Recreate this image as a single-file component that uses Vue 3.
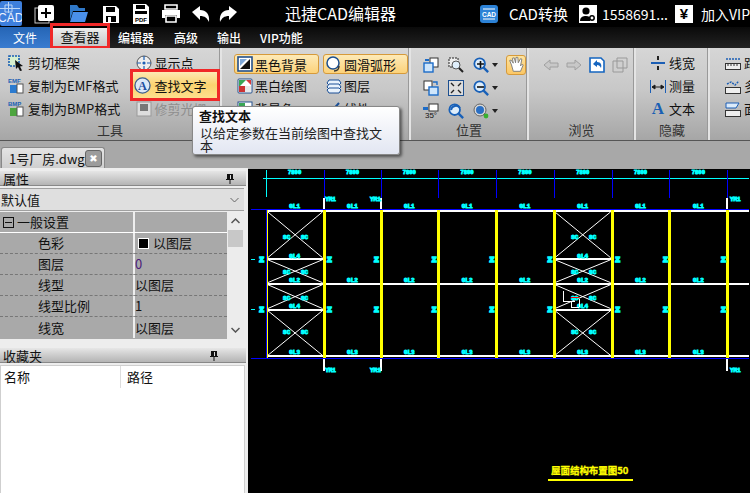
<script setup>
const cols = [265, 323, 381, 438, 496, 554, 612, 670, 728]
const yellow = [323, 381, 438, 496, 554, 612, 670, 728]
const mids = [294, 352, 409, 467, 525, 583, 641, 699]
const horiz = [258, 309]
const bracedBays = [[267, 322], [555, 611]]
const brace = [[211, 257], [259, 282], [284, 308], [310, 355]]
const sideLabels = [261, 329, 376, 434, 492, 550, 618, 666, 724]
const stubs = [323, 381, 728]
const ymLabels = [[330, 200], [375, 200], [736, 200], [330, 372], [375, 372], [736, 372]]
const rows = [
  { name: '色彩', val: '以图层', swatch: true },
  { name: '图层', val: '0', purple: true },
  { name: '线型', val: '以图层' },
  { name: '线型比例', val: '1' },
  { name: '线宽', val: '以图层' }
]
</script>

<template>
  <div class="app">
    <svg class="defs" width="0" height="0">
      <symbol id="mag" viewBox="0 0 18 18">
        <circle cx="7.5" cy="7.5" r="6" fill="#dfeefb" stroke="#1860b8" stroke-width="2" />
        <path d="M12 12l5 5" stroke="#1860b8" stroke-width="2.6" />
      </symbol>
      <symbol id="pages" viewBox="0 0 16 16">
        <rect x="7" y="1" width="8" height="9" fill="#fff" stroke="#333" />
        <rect x="1" y="6" width="9" height="9" fill="#cfe6fb" stroke="#1c6cc8" stroke-width="1.4" />
        <path d="M2 2h4v2H2z" fill="#1c6cc8" />
      </symbol>
    </svg>

    <header class="title">
      <svg class="logo" width="22" height="25" viewBox="0 0 22 25">
        <rect width="22" height="25" rx="2" fill="#3d7fdc" />
        <path d="M0 7.500H20M8.500 1V12M5 4h7v7H5z" fill="none" stroke="#bcd6f6" />
        <text x="-2" y="21" class="logo-t">CAD</text>
      </svg>
      <div class="quick">
        <svg class="q" width="22" height="22" viewBox="0 0 22 22"><rect x="1" y="5" width="14" height="15" fill="none" stroke="#ccc" /><rect x="4" y="2" width="16" height="16" rx="2" fill="#fff" /><path d="M12 5v10M7 10h10" stroke="#000" stroke-width="2" /></svg>
        <svg class="q folder" width="20" height="20" viewBox="0 0 20 20"><path d="M1 1h7l2 3h6v3H4L1 16z" fill="#2f78c8" /><path d="M4 8h15l-3 10H1z" fill="#4a90ea" /></svg>
        <svg class="q disk" width="18" height="20" viewBox="0 0 18 20"><path d="M1 2h13l3 3v14H1z" fill="#fff" /><path d="M4 3h9v5H4zM4 12h10v6H4z" fill="#000" /><rect x="6" y="13" width="3" height="5" fill="#fff" /></svg>
        <svg class="q pdf" width="18" height="22" viewBox="0 0 18 22"><path d="M1 1h13l3 3v17H1z" fill="#fff" /><path d="M4 2h9v4H4zM3 8h12v3H3z" fill="#000" /><text x="9" y="19" text-anchor="middle" class="pdf-t">PDF</text></svg>
        <svg class="q print" width="20" height="19" viewBox="0 0 20 19"><path d="M4 1h12v4H4z" fill="none" stroke="#fff" stroke-width="1.6" /><path d="M1 6h18v8h-3v-3H4v3H1z" fill="#fff" /><path d="M5 12h10v6H5z" fill="none" stroke="#fff" stroke-width="1.6" /></svg>
        <svg class="q undo" width="18" height="18" viewBox="0 0 18 18"><path d="M0 7l8-6v4c6 0 10 4 9 12-2-4-4-6-9-6v4z" fill="#fff" /></svg>
        <svg class="q redo" width="18" height="18" viewBox="0 0 18 18"><path d="M18 7l-8-6v4C4 5 0 9 1 17c2-4 4-6 9-6v4z" fill="#fff" /></svg>
      </div>
      <div class="app-name">迅捷CAD编辑器</div>
      <div class="status">
        <svg class="conv" width="18" height="18" viewBox="0 0 18 18"><rect width="18" height="18" rx="3" fill="#2c82d6" /><path d="M3 4h12M3 14h12" stroke="#fff" /><text x="9" y="12" text-anchor="middle" class="cad-t">CAD</text></svg>
        <span class="st-a">CAD转换</span>
        <svg class="usr" width="18" height="18" viewBox="0 0 18 18"><rect width="18" height="18" fill="#fff" /><circle cx="7" cy="6" r="3.6" /><path d="M1 16c0-4 3-5 6-5s4 1 4 2v3z" /><circle cx="13" cy="13" r="2.2" fill="none" stroke="#000" stroke-width="1.5" /></svg>
        <span class="st-b">1558691...</span>
        <span class="yen">¥</span>
        <span class="st-c">加入VIP</span>
      </div>
    </header>

    <nav class="menu">
      <div class="file">文件</div>
      <div class="viewer"><span>查看器</span></div>
      <div class="mi m1">编辑器</div>
      <div class="mi m2">高级</div>
      <div class="mi m3">输出</div>
      <div class="mi m4">VIP功能</div>
    </nav>

    <section class="ribbon">
      <div class="group g1">
        <div class="cols">
          <div class="col c1">
            <div class="rb">
              <svg width="16" height="16" viewBox="0 0 16 16"><rect x="1" y="1" width="10" height="10" fill="#d8f0d0" stroke="#1a5fb4" stroke-dasharray="2 1" stroke-width="1.6" /><path d="M7 5l8 6-3 .5 2 4-2 .5-2-4-2 2z" fill="#111" /></svg>
              <span>剪切框架</span>
            </div>
            <div class="rb">
              <svg width="16" height="17" viewBox="0 0 16 17"><text x="0" y="6" class="ico-t blue">EMF</text><rect x="2" y="8" width="7" height="8" fill="#2b7bd0" /><rect x="9" y="7" width="6" height="9" fill="#fff" stroke="#555" /></svg>
              <span>复制为EMF格式</span>
            </div>
            <div class="rb">
              <svg width="16" height="17" viewBox="0 0 16 17"><text x="0" y="6" class="ico-t blue">BMP</text><rect x="2" y="8" width="7" height="8" fill="#4da53f" /><rect x="9" y="7" width="6" height="9" fill="#fff" stroke="#555" /></svg>
              <span>复制为BMP格式</span>
            </div>
          </div>
          <div class="col c2">
            <div class="rb">
              <svg width="16" height="16" viewBox="0 0 16 16"><circle cx="8" cy="8" r="7" fill="#eee" stroke="#555" /><path d="M8 1v4M8 11v4M1 8h4M11 8h4" stroke="#1c5fb5" stroke-width="1.2" /><circle cx="8" cy="8" r="1.6" fill="#1c5fb5" /></svg>
              <span>显示点</span>
            </div>
            <div class="rb active">
              <svg width="17" height="17" viewBox="0 0 18 18"><circle cx="9" cy="9" r="8" fill="#dce8f6" stroke="#3a5f90" stroke-width="1.4" /><text x="9" y="14" text-anchor="middle" class="a-t">A</text></svg>
              <span>查找文字</span>
            </div>
            <div class="rb dim">
              <svg width="16" height="16" viewBox="0 0 16 16"><rect x="1" y="1" width="14" height="14" fill="#ddd" stroke="#999" /><rect x="4" y="3" width="8" height="7" fill="#777" /></svg>
              <span>修剪光栅</span>
            </div>
          </div>
        </div>
        <div class="glabel">工具</div>
      </div>

      <div class="group g2">
        <div class="cols">
          <div class="col c3">
            <div class="rb on">
              <svg width="16" height="16" viewBox="0 0 16 16"><rect x="1" y="1" width="14" height="14" fill="#fff" stroke="#24508c" stroke-width="1.6" /><path d="M3 13L13 3v10z" fill="#111" /><path d="M3 3h7L3 10z" fill="#7fa8d8" /></svg>
              <span>黑色背景</span>
            </div>
            <div class="rb">
              <svg width="16" height="16" viewBox="0 0 16 16"><rect x="1" y="1" width="14" height="14" rx="1" fill="#fff" stroke="#24508c" /><path d="M2 2h7L2 9z" fill="#3aa655" /><path d="M9 2h5v5z" fill="#d83a3a" /><rect x="2" y="8" width="6" height="6" fill="#c33" /><rect x="8" y="8" width="6" height="6" fill="#e8e8e8" /></svg>
              <span>黑白绘图</span>
            </div>
            <div class="rb">
              <svg width="16" height="16" viewBox="0 0 16 16"><rect x="1" y="1" width="14" height="14" fill="#fff" stroke="#24508c" /><path d="M2 2h6v4H2z" fill="#3aa655" /></svg>
              <span>背景色</span>
            </div>
          </div>
          <div class="col c4">
            <div class="rb on">
              <svg width="16" height="16" viewBox="0 0 16 16"><circle cx="7" cy="7" r="6" fill="#fff" stroke="#1c4f90" stroke-width="1.5" /><path d="M13 10c0 3-2 5-5 5" fill="none" stroke="#333" stroke-width="1.4" /></svg>
              <span>圆滑弧形</span>
            </div>
            <div class="rb">
              <svg width="16" height="16" viewBox="0 0 16 16"><g fill="#e9f2fb" stroke="#1a4f96"><path d="M3 2h10l2 3-2 2H3L1 5z" /><path d="M3 6h10l2 3-2 2H3L1 9z" /><path d="M3 10h10l2 2-2 3H3l-2-3z" /></g></svg>
              <span>图层</span>
            </div>
            <div class="rb">
              <svg width="16" height="16" viewBox="0 0 16 16"><path d="M2 14L13 2" stroke="#1a4f96" stroke-width="2" /></svg>
              <span>线性</span>
            </div>
          </div>
        </div>
      </div>

      <div class="group g3">
        <div class="icon-grid">
          <svg class="ig" width="16" height="16"><use href="#pages" /></svg>
          <svg class="ig" width="16" height="16" viewBox="0 0 16 16"><rect x="1" y="1" width="9" height="9" fill="#eee" stroke="#222" stroke-dasharray="2 1" /><circle cx="8" cy="8" r="4" fill="#dfeefb" stroke="#555" /><path d="M11 11l4 4" stroke="#222" stroke-width="2" /></svg>
          <div class="ig drop"><svg width="16" height="16"><use href="#mag" /><path d="M4 7h7M7.5 4v7" stroke="#111" stroke-width="1.6" /></svg><i></i></div>
          <svg class="hand" width="20" height="20" viewBox="0 0 20 20"><path d="M5 10L3 5l1.500-.5L7 8 6 2.500 8 2l1.500 5.500L10 1.500h2l.5 6L15 3l1.500.5-1.500 7.500 2-2 1 1-3 7H7z" fill="#fff" stroke="#777" /></svg>
          <svg class="ig" width="16" height="16" viewBox="0 0 16 16"><rect x="1" y="1" width="8" height="9" fill="#fff" stroke="#333" /><rect x="6" y="7" width="9" height="8" fill="#cfe6fb" stroke="#1c6cc8" stroke-width="1.4" /><path d="M10 2h4v3" fill="none" stroke="#1c6cc8" stroke-width="1.4" /></svg>
          <svg class="ig" width="16" height="16" viewBox="0 0 16 16"><rect x=".5" y=".5" width="15" height="15" fill="#ddd" stroke="#1c4f90" /><path d="M3 3l3 3M13 3l-3 3M3 13l3-3M13 13l-3-3" stroke="#222" stroke-width="1.4" /></svg>
          <div class="ig drop"><svg width="16" height="16"><use href="#mag" /><path d="M4 7h7" stroke="#111" stroke-width="1.6" /></svg><i></i></div>
          <span></span>
          <svg class="ig" width="16" height="16" viewBox="0 0 16 16"><rect x="6" y="1" width="9" height="7" fill="#fff" stroke="#333" /><path d="M0 4h5v3H0z" fill="#1c6cc8" /><text x="8" y="15" text-anchor="middle" class="deg">35°</text></svg>
          <svg class="ig" width="16" height="16"><use href="#mag" /><path d="M3 7a5 5 0 0 1 9-2" fill="none" stroke="#1860b8" stroke-width="2" /></svg>
          <div class="ig drop"><svg width="16" height="16" viewBox="0 0 16 16"><circle cx="7" cy="7" r="6" fill="#d8d8d8" stroke="#666" /><circle cx="7" cy="7" r="4" fill="#2a6fc4" /><path d="M11 11l3 3" stroke="#555" stroke-width="2" /><circle cx="13" cy="13" r="2.400" fill="#38b030" /></svg><i></i></div>
          <span></span>
        </div>
        <div class="glabel">位置</div>
      </div>

      <div class="group g4">
        <div class="browse">
          <svg width="16" height="12" viewBox="0 0 16 12"><path d="M1 6l6-5v3h8v4H7v3z" fill="#c8c8c8" stroke="#a0a0a0" /></svg>
          <svg width="16" height="12" viewBox="0 0 16 12"><path d="M15 6L9 1v3H1v4h8v3z" fill="#c8c8c8" stroke="#a0a0a0" /></svg>
          <svg width="16" height="16" viewBox="0 0 16 16"><path d="M1 1h11l3 3v11H1z" fill="#fff" stroke="#1565c0" stroke-width="1.6" /><path d="M4 7l4-4v2c4 0 5 3 4 6-1-2-2-3-4-3v2z" fill="#1565c0" /></svg>
          <svg width="16" height="16" viewBox="0 0 16 16"><path d="M1 4h10v11H1z" fill="#cfcfcf" stroke="#999" /><path d="M5 1h10v10H5z" fill="none" stroke="#999" /></svg>
        </div>
        <div class="glabel">浏览</div>
      </div>

      <div class="group g5">
        <div class="col tools">
          <div class="rb">
            <svg width="16" height="16" viewBox="0 0 16 16"><path d="M1 8h14" stroke="#1c5fb5" stroke-width="2" /><path d="M8 1v4M8 11v4" stroke="#222" stroke-width="2" /></svg>
            <span>线宽</span>
          </div>
          <div class="rb">
            <svg width="16" height="16" viewBox="0 0 16 16"><path d="M.5 2v13M15.500 2v13" stroke="#1c5fb5" /><path d="M2 9h12M2 9l3-2v4zM14 9l-3-2v4z" stroke="#222" /></svg>
            <span>测量</span>
          </div>
          <div class="rb">
            <span class="big-a">A</span>
            <span>文本</span>
          </div>
        </div>
        <div class="glabel">隐藏</div>
      </div>

      <div class="group g6">
        <div class="col tools">
          <div class="rb">
            <svg width="16" height="16" viewBox="0 0 16 16"><path d="M1 4h14" stroke="#1c5fb5" stroke-dasharray="2 1" stroke-width="1.400" /><rect x=".5" y="8.500" width="15" height="6" fill="#eee" stroke="#333" /><path d="M3 9v2M6 9v2M9 9v2M12 9v2" stroke="#333" /></svg>
            <span>距</span>
          </div>
          <div class="rb">
            <svg width="16" height="16" viewBox="0 0 16 16"><path d="M2 6l4-2 4 3 4-4" stroke="#1c5fb5" stroke-dasharray="2 1" fill="none" stroke-width="1.400" /><rect x=".5" y="9.500" width="15" height="6" fill="#eee" stroke="#333" /></svg>
            <span>多</span>
          </div>
          <div class="rb">
            <svg width="16" height="16" viewBox="0 0 16 16"><path d="M1 2h13l-3 5H1z" fill="#dcebfa" stroke="#1c5fb5" /><rect x=".5" y="9.500" width="15" height="6" fill="#eee" stroke="#333" /></svg>
            <span>面</span>
          </div>
        </div>
      </div>
    </section>

    <div class="tabs">
      <div class="doc-tab">
        <span>1号厂房.dwg</span>
        <b class="close">✖</b>
      </div>
    </div>

    <main class="main">
      <aside class="side">
        <div class="panel-head">
          <span>属性</span>
          <svg width="10" height="11" viewBox="0 0 10 11"><path d="M2 1h6v5h1v1H5.500v4h-1V7H1V6h1zM4 2v4" fill="#111" /><path d="M5 2h1v4H5z" fill="#ddd" /></svg>
        </div>
        <div class="combo">
          <span>默认值</span>
          <svg width="9" height="6" viewBox="0 0 9 6"><path d="M.5 1l4 4 4-4" fill="none" stroke="#666" /></svg>
        </div>
        <div class="grid-wrap">
          <div class="grid">
            <div class="row head">
              <div class="cn"><i class="minus"></i>一般设置</div>
              <div class="cv"></div>
            </div>
            <div v-for="r in rows" :key="r.name" class="row">
              <div class="cn indent">{{ r.name }}</div>
              <div class="cv" :class="{ purple: r.purple }">
                <i v-if="r.swatch" class="swatch"></i>{{ r.val }}
              </div>
            </div>
          </div>
          <div class="scroll">
            <svg width="9" height="6" viewBox="0 0 9 6"><path d="M.5 5l4-4 4 4" fill="none" stroke="#555" stroke-width="1.500" /></svg>
            <div class="thumb"></div>
            <svg class="down" width="9" height="6" viewBox="0 0 9 6"><path d="M.5 1l4 4 4-4" fill="none" stroke="#555" stroke-width="1.500" /></svg>
          </div>
        </div>
        <div class="panel-head fav">
          <span>收藏夹</span>
          <svg width="10" height="11" viewBox="0 0 10 11"><path d="M2 1h6v5h1v1H5.500v4h-1V7H1V6h1z" fill="#111" /><path d="M5 2h1v4H5z" fill="#ddd" /></svg>
        </div>
        <div class="list">
          <div class="list-head">
            <div class="ln">名称</div>
            <div class="lp">路径</div>
          </div>
        </div>
      </aside>

      <svg class="cad" width="502" height="325" viewBox="248 168 502 325" shape-rendering="crispEdges">
        <!-- 尺寸线 -->
        <path d="M262 177.500H750" stroke="#00ffff" />
        <path d="M265.500 169V196" stroke="#00ffff" />
        <path v-for="x in cols.slice(1)" :key="'t' + x" :d="`M${x}.5 169V197`" stroke="#0000ff" />
        <text v-for="x in mids" :key="'dim' + x" :x="x" y="173.500" class="lbl wide">7800</text>
        <!-- 柱脚短线 -->
        <g v-for="x in stubs" :key="'s' + x">
          <rect :x="x - 1" y="197" width="2" height="12" fill="#fff" />
          <rect :x="x - 1" y="359" width="2" height="12" fill="#fff" />
        </g>
        <text v-for="p in ymLabels" :key="'ym' + p[0] + p[1]" :x="p[0]" :y="p[1]" class="lbl">YM1</text>
        <!-- 蓝色外框 -->
        <path d="M250 208.500H750M250 358.500H750M265.500 208V359" stroke="#0000ff" />
        <!-- 横梁 -->
        <rect x="266" y="209" width="484" height="2.500" fill="#fff" />
        <rect x="266" y="282" width="484" height="2" fill="#fff" />
        <rect x="266" y="355" width="484" height="2" fill="#fff" />
        <g v-for="b in bracedBays" :key="'h' + b[0]">
          <rect v-for="y in horiz" :key="y" :x="b[0]" :y="y - 1" :width="b[1] - b[0]" height="2" fill="#fff" />
          <g v-for="s in brace" :key="s[0]" shape-rendering="auto" stroke="#fff">
            <path :d="`M${b[0]} ${s[0]}L${b[1]} ${s[1]}M${b[1]} ${s[0]}L${b[0]} ${s[1]}`" />
          </g>
        </g>
        <!-- 黄色立柱 -->
        <rect v-for="x in yellow" :key="'y' + x" :x="x - 1" y="209" width="3" height="149" fill="#ffff00" />
        <rect x="266" y="209" width="1" height="149" fill="#ffff00" />
        <!-- 标注 -->
        <g v-for="x in mids" :key="'m' + x">
          <text :x="x" y="207" class="lbl">GL1</text>
          <text :x="x" y="281" class="lbl">GL2</text>
          <text :x="x" y="354" class="lbl">GL3</text>
        </g>
        <g v-for="x in [294, 583]" :key="'mb' + x">
          <text :x="x" y="257" class="lbl">GL4</text>
          <text :x="x" y="307" class="lbl">GL4</text>
        </g>
        <g v-for="x in sideLabels" :key="'sl' + x">
          <text :x="x" y="261" class="lbl z">Z</text>
          <text :x="x" y="311" class="lbl z">Z</text>
        </g>
        <g v-for="x in [286, 304, 575, 593]" :key="'xl' + x">
          <text :x="x" y="238" class="lbl">SC</text>
          <text :x="x" y="273" class="lbl">SC</text>
          <text :x="x" y="299" class="lbl">SC</text>
          <text :x="x" y="334" class="lbl">SC</text>
        </g>
        <path d="M250 258.500H254M250 308.500H254" stroke="#00ffff" />
        <!-- 光标 -->
        <path d="M563.500 290.500V300.500H575.500M571.500 300.500V306.500H579.500V298" fill="none" stroke="#fff" />
        <path d="M571 296.500H579" stroke="#ff0000" />
        <!-- 图名 -->
        <text x="590" y="474" class="cad-title">屋面结构布置图50</text>
        <rect x="548" y="479" width="85" height="2" fill="#ffff00" />
      </svg>
    </main>

    <div class="tooltip">
      <div class="tt-h">查找文本</div>
      <div class="tt-b">以给定参数在当前绘图中查找文本</div>
    </div>
  </div>
</template>

<style>
html, body { margin: 0; background: #000; }
</style>

<style scoped>
.app {
  position: relative;
  width: 750px;
  height: 493px;
  overflow: hidden;
  display: flex;
  flex-direction: column;
  font-family: "Noto Sans CJK SC", "Liberation Sans", sans-serif;
  font-size: 13px;
  color: #111;
  background: #000;
}
.defs { position: absolute; }

/* 标题栏 */
.title {
  height: 27px;
  flex: none;
  display: flex;
  align-items: center;
  background: #000;
  color: #fff;
}
.logo { flex: none; }
.logo-t { font: 12px "Liberation Sans", sans-serif; fill: #eef4ff; }
.quick { display: flex; align-items: center; margin-left: 12px; width: 206px; }
.q { flex: none; }
.folder { margin-left: 13px; }
.disk { margin-left: 13px; }
.pdf { margin-left: 12px; }
.print { margin-left: 11px; }
.undo { margin-left: 11px; }
.redo { margin-left: 9px; }
.pdf-t { font: 700 6px "Liberation Sans", sans-serif; fill: #000; }
.app-name { font-size: 16px; margin-left: 48px; line-height: 27px; width: 198px; white-space: nowrap; }
.status { display: flex; align-items: center; white-space: nowrap; font-size: 14px; }
.cad-t { font: 700 6.500px "Liberation Sans", sans-serif; fill: #fff; }
.st-a { margin-left: 11px; font-size: 15px; }
.usr { margin-left: 11px; }
.st-b { margin-left: 5px; }
.yen { margin-left: 7px; width: 18px; height: 18px; background: #fff; color: #000; font: 700 15px/18px "Liberation Sans", sans-serif; text-align: center; }
.st-c { margin-left: 8px; }

/* 菜单 */
.menu {
  height: 21px;
  flex: none;
  display: flex;
  align-items: stretch;
  background: linear-gradient(#0a0a0a, #222);
  color: #fff;
  position: relative;
  font-size: 12px;
}
.file {
  width: 50px;
  text-align: center;
  line-height: 21px;
  font-size: 12px;
  background: linear-gradient(#2565b5, #3a7cd0);
}
.viewer {
  width: 60px;
  height: 25px;
  margin-top: -4px;
  box-sizing: border-box;
  border: 3px solid #f02828;
  border-bottom-width: 2px;
  display: flex;
  position: relative;
  z-index: 2;
  padding-top: 2px;
  background: #000;
}
.viewer span {
  flex: 1;
  background: linear-gradient(#ededed, #c8c8c8);
  color: #111;
  text-align: center;
  font-size: 13px;
  line-height: 18px;
}
.mi { line-height: 21px; font-weight: 500; }
.m1 { margin-left: 8px; }
.m2 { margin-left: 20px; }
.m3 { margin-left: 19px; }
.m4 { margin-left: 19px; }

/* 功能区 */
.ribbon {
  height: 93px;
  flex: none;
  display: flex;
  background: linear-gradient(#d6d6d6, #c8c8c8 45%, #a6a6a6);
  border-bottom: 1px solid #555;
  box-sizing: border-box;
}
.group {
  flex: none;
  display: flex;
  flex-direction: column;
  border-right: 2px solid #e4e4e4;
  box-shadow: inset -1px 0 0 #999;
  box-sizing: border-box;
  position: relative;
}
.g1 { width: 222px; }
.g2 { width: 189px; }
.g3 { width: 118px; }
.g4 { width: 107px; }
.g5 { width: 74px; }
.g6 { flex: 1; border-right: 0; box-shadow: none; }
.cols { display: flex; height: 72px; padding-top: 3px; box-sizing: border-box; }
.col { display: flex; flex-direction: column; }
.c1 { width: 131px; padding-left: 8px; box-sizing: border-box; }
.c2 { width: 90px; }
.c3 { width: 98px; padding-left: 9px; box-sizing: border-box; margin-left: 3px; }
.c4 { width: 85px; }
.rb {
  height: 23px;
  display: flex;
  align-items: center;
  gap: 4px;
  white-space: nowrap;
  box-sizing: border-box;
  font-size: 13px;
}
.rb svg { flex: none; }
.c2 .rb { padding-left: 6px; gap: 2px; }
.c2 .rb.active {
  height: 32px;
  margin: -5px 0 -4px;
  padding-left: 1px;
  gap: 3px;
  border: 3px solid #f02828;
  background: linear-gradient(#fde9b4, #fbd36f 50%, #fde08e);
  position: relative;
  z-index: 1;
}
.dim { color: #8e8e8e; }
.c3 .rb, .c4 .rb { padding-left: 3px; gap: 2px; }
.c3 .rb.on, .c4 .rb.on {
  height: 20px;
  margin-top: 3px;
  width: 85px;
  padding-left: 2px;
  background: linear-gradient(#fdeab8, #fcd27a);
  border: 1px solid #d69a3a;
  border-radius: 3px;
}
.glabel {
  position: absolute;
  left: 0;
  right: 0;
  bottom: 0;
  height: 21px;
  line-height: 21px;
  text-align: center;
  font-size: 13px;
  color: #333;
}

.icon-grid {
  display: grid;
  grid-template-columns: 25px 25px 32px 26px;
  grid-auto-rows: 23px;
  padding: 5px 0 0 12px;
  align-items: center;
}
.drop { display: flex; align-items: center; gap: 3px; }
.drop i {
  width: 0;
  height: 0;
  border: 3.500px solid transparent;
  border-top: 4px solid #222;
  border-bottom: 0;
}
.hand {
  box-sizing: border-box;
  width: 20px;
  height: 20px;
  background: linear-gradient(#fde3a0, #fbc766);
  border: 1px solid #d69a3a;
  border-radius: 3px;
  margin-left: 1px;
}
.deg { font: 8px "Liberation Sans", sans-serif; fill: #111; }
.browse { display: flex; align-items: center; gap: 7px; padding: 9px 0 0 14px; }
.tools { padding: 3px 0 0 14px; }
.tools .rb { gap: 3px; }
.g6 .tools { padding-left: 15px; }
.big-a { width: 16px; font: 700 17px "Liberation Serif", serif; color: #1a5fb4; text-align: center; }
.ico-t { font: 700 6px "Liberation Sans", sans-serif; }
.blue { fill: #1a5fb4; }
.a-t { font: 700 13px "Liberation Serif", serif; fill: #1c50a0; }

/* 文档标签 */
.tabs {
  height: 27px;
  flex: none;
  background: #a8a8a8;
  box-sizing: border-box;
  padding: 6px 0 0 1px;
}
.doc-tab {
  width: 104px;
  height: 21px;
  display: flex;
  align-items: center;
  justify-content: space-between;
  box-sizing: border-box;
  padding: 0 2px 0 7px;
  background: linear-gradient(#e4e4e4, #cfcfcf);
  border: 1px solid #888;
  border-bottom: 0;
  border-radius: 3px 3px 0 0;
  font-size: 13px;
}
.close {
  width: 17px;
  height: 17px;
  background: #9c9c9c;
  border: 1px solid #666;
  border-radius: 3px;
  box-sizing: border-box;
  color: #fff;
  font: 700 10px/15px "DejaVu Sans", sans-serif;
  text-align: center;
}

/* 主体 */
.main { flex: 1; display: flex; min-height: 0; }
.side {
  width: 248px;
  flex: none;
  background: #ededed;
  display: flex;
  flex-direction: column;
  box-sizing: border-box;
  padding-top: 3px;
}
.panel-head {
  height: 15px;
  box-sizing: border-box;
  flex: none;
  display: flex;
  align-items: center;
  justify-content: space-between;
  padding: 0 11px 0 3px;
  background: linear-gradient(#e6e6e6, #b4b4b4);
  border-bottom: 1px solid #888;
  font-size: 13px;
  margin-right: 2px;
}
.combo {
  height: 23px;
  flex: none;
  margin: 2px 4px 1px 0;
  box-sizing: border-box;
  display: flex;
  align-items: center;
  justify-content: space-between;
  padding: 0 5px 0 1px;
  background: #dfdfdf;
  border-top: 1px solid #a0a0a0;
  border-bottom: 1px solid #a0a0a0;
}
.grid-wrap { height: 127px; flex: none; display: flex; margin-right: 4px; }
.grid { flex: 1; background: #a9a9a9; }
.row { height: 21px; display: flex; box-sizing: border-box; border-bottom: 1px dashed #777; line-height: 20px; }
.row:last-child { border-bottom: 0; }
.row.head { border-bottom: 1px solid #fff; }
.cn { width: 134px; flex: none; display: flex; align-items: center; box-sizing: border-box; border-right: 1px solid #eee; white-space: nowrap; }
.row.head .cn { padding-left: 3px; gap: 1px; }
.indent { padding-left: 38px; }
.cv { padding-left: 0; flex: 1; display: flex; align-items: center; border-left: 1px solid #eee; }
.purple { color: #4b1a7a; }
.minus {
  width: 11px;
  height: 11px;
  box-sizing: border-box;
  border: 1px solid #111;
  background: linear-gradient(#111, #111) center / 7px 1px no-repeat;
  margin-right: 2px;
}
.swatch {
  width: 9px;
  height: 9px;
  background: #000;
  border: 1px solid #fff;
  margin: 0 4px 0 3px;
}
.scroll {
  width: 17px;
  flex: none;
  background: #ececec;
  display: flex;
  flex-direction: column;
  align-items: center;
  padding: 6px 0;
  box-sizing: border-box;
}
.thumb { width: 15px; height: 17px; background: #c8c8c8; margin-top: 6px; }
.down { margin-top: auto; }
.fav { margin-top: 9px; padding-right: 27px; margin-right: 2px; }
.list { flex: 1; background: #fff; margin: 2px 3px 0 0; border: 1px solid #cfcfcf; border-bottom: 0; }
.list-head { display: flex; height: 22px; line-height: 22px; }
.ln { width: 120px; padding-left: 3px; border-right: 1px solid #ddd; box-sizing: border-box; }
.lp { padding-left: 6px; }

.cad { flex: none; display: block; background: #000; border-top: 1px solid #a8a8a8; box-sizing: border-box; }
.lbl {
  font: 700 6px "Liberation Mono", monospace;
  fill: #00ffff;
  stroke: #00ffff;
  stroke-width: .9px;
  text-anchor: middle;
}
.wide { font-size: 5.500px; }
.z { font-size: 8px; stroke-width: 1.600px; }
.cad-title {
  font-family: "Noto Sans CJK SC", sans-serif;
  font-size: 9.500px;
  font-weight: 700;
  fill: #ffff00;
  stroke: #ffff00;
  stroke-width: .3px;
  text-anchor: middle;
}

/* 提示 */
.tooltip {
  position: absolute;
  left: 192px;
  top: 106px;
  width: 208px;
  height: 49px;
  box-sizing: border-box;
  padding: 0 8px 0 7px;
  background: linear-gradient(#fff, #e2e6f2);
  border: 1px solid #888;
  border-radius: 3px;
  box-shadow: 2px 2px 3px rgba(0, 0, 0, .5);
  z-index: 5;
  font-size: 13px;
  color: #222;
}
.tt-h { font-weight: 700; margin-left: -1px; line-height: 17px; color: #111; }
.tt-b { line-height: 13px; margin-top: 2px; }
</style>
